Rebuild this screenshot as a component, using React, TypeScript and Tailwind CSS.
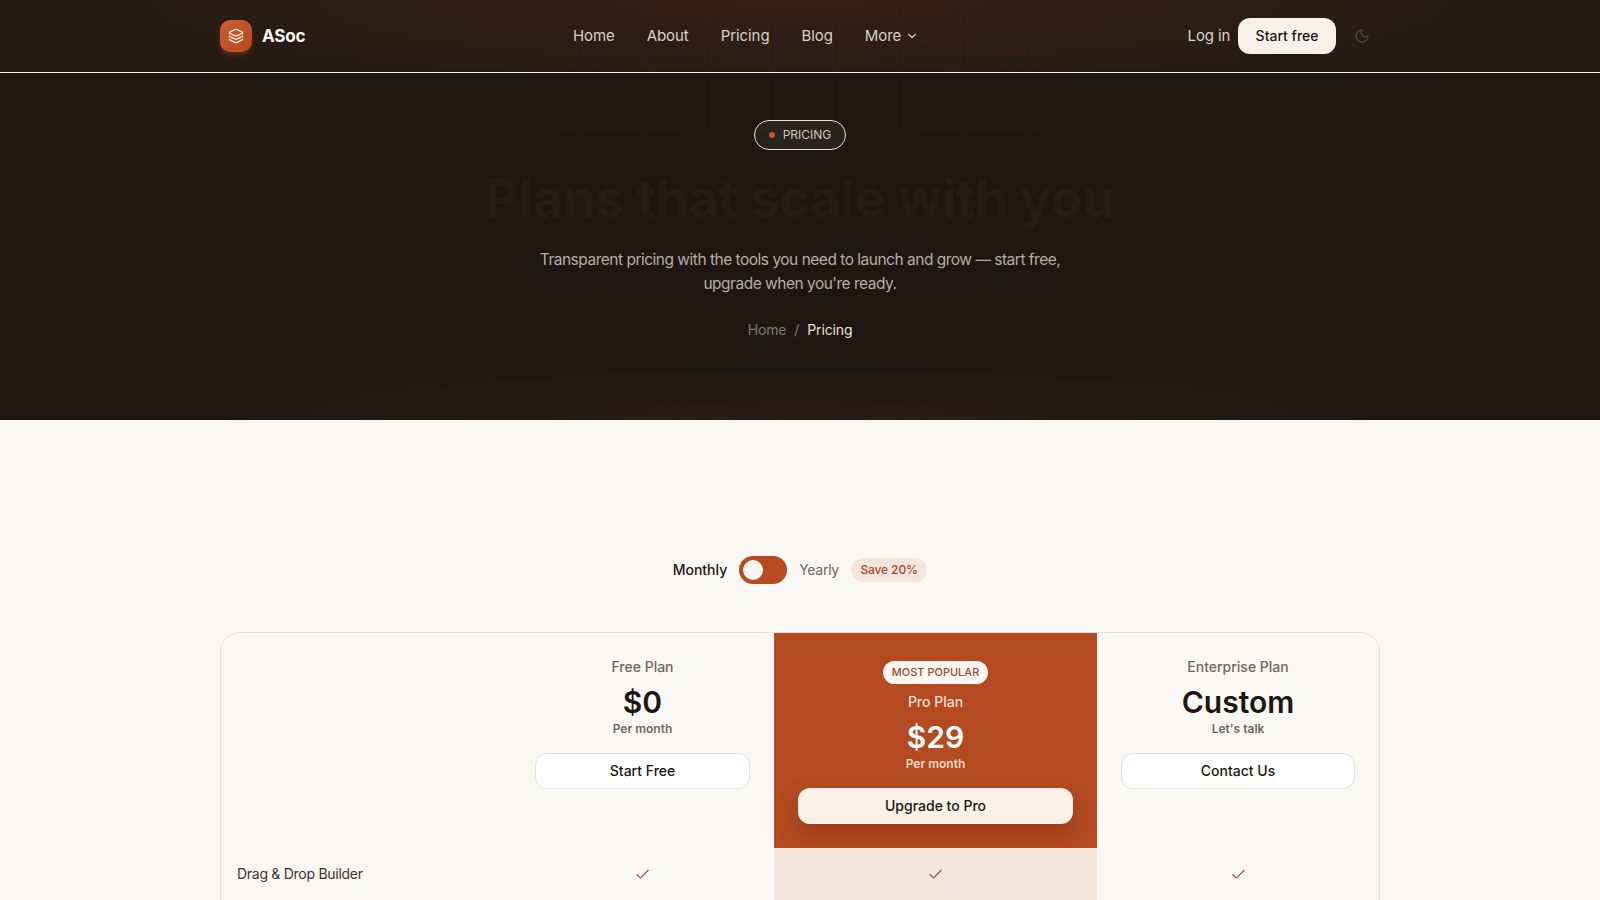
import { Check, ChevronDown, Layers, Moon } from "lucide-react";

const navLinks = ["Home", "About", "Pricing", "Blog"];

const PlanHead = ({ name, price, sub, cta }: { name: string; price: string; sub: string; cta: string }) => {
    return (
        <div className="flex flex-col items-center p-6 pb-0">
            <div className="text-sm leading-5 font-medium text-[#6f6860]">{name}</div>
            <div className="mt-[7px] text-3xl leading-9 font-semibold text-[#1c1712]">{price}</div>
            <div className="mt-px text-xs leading-4 font-semibold text-[#6f6860]">{sub}</div>
            <button className="mt-4 h-9 w-full rounded-xl border border-[#e6e1da] bg-white text-sm font-medium text-[#1c1712]">
                {cta}
            </button>
        </div>
    );
};

const App = () => {
    return (
        <div className="h-[900px] overflow-hidden bg-[#faf8f5] font-['Inter',sans-serif]">
            <section className="relative h-[420px] overflow-hidden bg-[#1c1712]">
                <div className="absolute inset-0 bg-[radial-gradient(ellipse_42%_70px_at_50%_420px,rgba(184,74,32,0.09),transparent)]" />
                <div className="absolute inset-0 bg-[linear-gradient(rgba(255,255,255,0.02)_1px,transparent_1px),linear-gradient(90deg,rgba(255,255,255,0.02)_1px,transparent_1px)] bg-[size:64px_64px] [mask-image:radial-gradient(ellipse_520px_200px_at_50%_90px,black,transparent)]" />

                <header className="relative flex h-[73px] items-center border-b border-[#f5efe6] bg-[radial-gradient(ellipse_55%_110px_at_50%_0,rgba(184,74,32,0.14),transparent),linear-gradient(rgba(60,40,25,0.15),rgba(60,40,25,0.15))]">
                    <div className="mx-auto flex w-[1160px] items-center">
                        <div className="flex w-[353px] items-center gap-2.5">
                            <div className="flex h-8 w-8 items-center justify-center rounded-[10px] bg-gradient-to-br from-[#cc5c30] to-[#b4481f] shadow-md shadow-[#b84a20]/30">
                                <Layers size={16} className="text-[#f8e9dc]" />
                            </div>
                            <span className="pt-px text-[17px] font-bold tracking-[-0.01em] text-[#faf7f3]">ASoc</span>
                        </div>
                        <nav className="flex items-center gap-8 text-[15px] font-normal tracking-[-0.005em] text-[#d9d3ca]">
                            {navLinks.map((link) => (
                                <a key={link}>{link}</a>
                            ))}
                            <a className="flex items-center gap-1">
                                More <ChevronDown size={14} />
                            </a>
                        </nav>
                        <div className="ml-auto flex items-center">
                            <a className="text-[15px] font-normal tracking-[-0.01em] text-[#d9d3ca]">Log in</a>
                            <button className="ml-2 h-9 rounded-xl bg-[#f7f1ea] px-[17.5px] text-sm font-medium text-[#1c1712]">
                                Start free
                            </button>
                            <Moon size={16} className="mx-[10px] ml-[18px] text-[#4d463f]" />
                        </div>
                    </div>
                </header>

                <div className="relative flex flex-col items-center pt-[47px]">
                    <div className="flex h-[30px] items-center gap-2 rounded-full border border-[#e8e2da] bg-white/5 px-[14px] text-xs font-normal text-[#cfc9c0]">
                        <span className="h-1.5 w-1.5 rounded-full bg-[#c8562b]" />
                        PRICING
                    </div>
                    <h1 className="mt-[21px] text-[52px] leading-[56px] font-bold text-[#231e19]">Plans that scale with you</h1>
                    <p className="mt-[21px] w-[560px] text-center text-[15.5px] leading-6 tracking-[-0.032em] text-[#b5aea5]">
                        Transparent pricing with the tools you need to launch and grow — start free, upgrade when you're ready.
                    </p>
                    <div className="mt-6 flex items-center gap-2 text-sm tracking-[-0.01em] text-[#7f7a73]">
                        <span>Home</span>
                        <span>/</span>
                        <span className="text-[#e8e2da]">Pricing</span>
                    </div>
                </div>
            </section>

            <section className="mx-auto w-[1160px]">
                <div className="flex h-[212px] items-end justify-center pb-[48px] text-sm">
                    <div className="flex items-center">
                        <span className="font-medium text-[#1c1712]">Monthly</span>
                        <div className="ml-3 flex h-7 w-12 items-center rounded-full bg-[#b84a20] pl-1">
                            <div className="h-5 w-5 rounded-full bg-[#faf7f3]" />
                        </div>
                        <span className="ml-3 tracking-[-0.02em] text-[#6f6860]">Yearly</span>
                        <span className="ml-3 flex h-6 items-center rounded-full bg-[#f5e6dd] px-[9.5px] text-xs font-medium tracking-[-0.01em] text-[#a8472a]">
                            Save 20%
                        </span>
                    </div>
                </div>

                <div className="overflow-hidden rounded-t-[20px] border border-[#e6e1da]">
                    <div className="grid grid-cols-[290px_263px_323px_282px]">
                        <div />
                        <PlanHead name="Free Plan" price="$0" sub="Per month" cta="Start Free" />
                        <div className="flex h-[215px] flex-col items-center bg-[#b54a20] px-6 pt-7">
                            <div className="flex h-[23px] items-center rounded-full bg-[#faf7f3] px-[9px] text-[11px] font-medium text-[#a8472a]">
                                MOST POPULAR
                            </div>
                            <div className="mt-2 text-sm leading-5 font-medium text-[#f8e3d3]">Pro Plan</div>
                            <div className="mt-[7px] text-3xl leading-9 font-semibold text-white">$29</div>
                            <div className="mt-px text-xs leading-4 font-semibold text-[#f8dcc6]">Per month</div>
                            <button className="mt-4 h-9 w-full rounded-xl bg-[#f9f1e7] text-sm font-medium text-[#1c1712] shadow-[0_10px_20px_rgba(90,30,5,0.3)]">
                                Upgrade to Pro
                            </button>
                        </div>
                        <PlanHead name="Enterprise Plan" price="Custom" sub="Let's talk" cta="Contact Us" />

                        <div className="flex h-[52px] items-center pl-4 text-sm tracking-[-0.02em] text-[#3a342e]">Drag &amp; Drop Builder</div>
                        <div className="flex items-center justify-center text-[#a8432a]">
                            <Check size={17} strokeWidth={1.5} />
                        </div>
                        <div className="flex items-center justify-center bg-[#f5e6dd] text-[#a8432a]">
                            <Check size={17} strokeWidth={1.5} />
                        </div>
                        <div className="flex items-center justify-center text-[#a8432a]">
                            <Check size={17} strokeWidth={1.5} />
                        </div>
                    </div>
                </div>
            </section>
        </div>
    );
};

export default App;
